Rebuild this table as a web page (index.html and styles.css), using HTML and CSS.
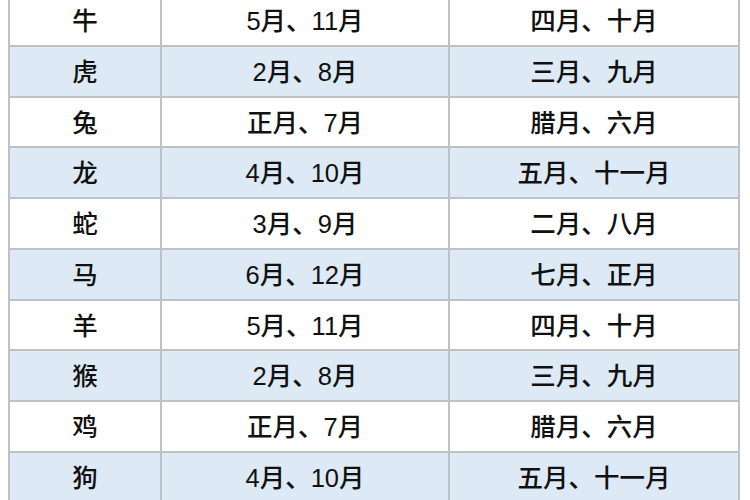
FILE: index.html
```html
<!DOCTYPE html>
<html lang="zh-CN">
<head>
<meta charset="utf-8">
<link rel="stylesheet" href="styles.css">
</head>
<body>
<div class="wrap">
<table class="months">
<colgroup><col class="c1"><col class="c2"><col class="c3"></colgroup>
<tbody>
<tr><td>牛</td><td>5月、11月</td><td>四月、十月</td></tr>
<tr class="alt"><td>虎</td><td>2月、8月</td><td>三月、九月</td></tr>
<tr><td>兔</td><td>正月、7月</td><td>腊月、六月</td></tr>
<tr class="alt"><td>龙</td><td>4月、10月</td><td>五月、十一月</td></tr>
<tr><td>蛇</td><td>3月、9月</td><td>二月、八月</td></tr>
<tr class="alt"><td>马</td><td>6月、12月</td><td>七月、正月</td></tr>
<tr><td>羊</td><td>5月、11月</td><td>四月、十月</td></tr>
<tr class="alt"><td>猴</td><td>2月、8月</td><td>三月、九月</td></tr>
<tr><td>鸡</td><td>正月、7月</td><td>腊月、六月</td></tr>
<tr class="alt"><td>狗</td><td>4月、10月</td><td>五月、十一月</td></tr>
</tbody>
</table>
</div>
</body>
</html>
```
FILE: styles.css
```css
html, body {
  margin: 0;
  padding: 0;
  background: #ffffff;
  overflow: hidden;
}
.wrap {
  width: 750px;
  height: 500px;
  overflow: hidden;
  padding-left: 8px;
  box-sizing: border-box;
}
.months {
  margin-top: -6px;
  border-collapse: collapse;
  table-layout: fixed;
  width: 730px;
  font-family: "Liberation Sans", "Noto Sans CJK SC", sans-serif;
  font-size: 25.5px;
  font-weight: 500;
  color: #111111;
}
.c1 { width: 152px; }
.c2 { width: 288px; }
.c3 { width: 290px; }
.months td {
  border: 2px solid #bfc2c5;
  height: 45.75px;
  padding: 3px 0 0;
  text-align: center;
  vertical-align: middle;
  line-height: 1;
}
.months tr.alt td {
  background: #dde9f5;
}
```
